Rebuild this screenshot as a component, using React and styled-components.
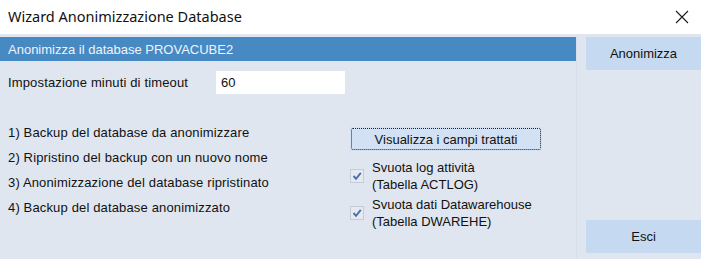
import styled, { createGlobalStyle } from "styled-components";

const GlobalStyle = createGlobalStyle`
  html, body {
    margin: 0;
    padding: 0;
    background: #ffffff;
  }
  * {
    box-sizing: border-box;
  }
`;

const steps = [
  "1) Backup del database da anonimizzare",
  "2) Ripristino del backup con un nuovo nome",
  "3) Anonimizzazione del database ripristinato",
  "4) Backup del database anonimizzato",
];

const options = [
  { title: "Svuota log attività", table: "(Tabella ACTLOG)" },
  { title: "Svuota dati Datawarehouse", table: "(Tabella DWAREHE)" },
];

const CheckIcon = () => (
  <svg width="10" height="10" viewBox="0 0 10 10">
    <path d="M1.5 5 L4 7.8 L8.8 1.8" fill="none" stroke="#4a6fae" strokeWidth="1.9" />
  </svg>
);

const CloseIcon = () => (
  <svg width="14" height="14" viewBox="0 0 14 14">
    <path d="M1 1 L13 13 M13 1 L1 13" stroke="#1a1a1a" strokeWidth="1.1" />
  </svg>
);

const App = () => {
  return (
    <>
      <GlobalStyle />
      <Window>
        <TitleBar>
          <TitleText>Wizard Anonimizzazione Database</TitleText>
          <CloseButton>
            <CloseIcon />
          </CloseButton>
        </TitleBar>
        <Body>
          <MainPane>
            <HeaderBar>Anonimizza il database PROVACUBE2</HeaderBar>
            <TimeoutRow>
              <Label>Impostazione minuti di timeout</Label>
              <TimeoutInput defaultValue="60" />
            </TimeoutRow>
            <StepsRow>
              <StepList>
                {steps.map((step) => (
                  <StepItem key={step}>{step}</StepItem>
                ))}
              </StepList>
              <OptionsColumn>
                <FieldsButton>
                  <FocusRing>Visualizza i campi trattati</FocusRing>
                </FieldsButton>
                {options.map((opt) => (
                  <OptionRow key={opt.table}>
                    <CheckBox>
                      <CheckIcon />
                    </CheckBox>
                    <OptionText>
                      <span>{opt.title}</span>
                      <span>{opt.table}</span>
                    </OptionText>
                  </OptionRow>
                ))}
              </OptionsColumn>
            </StepsRow>
          </MainPane>
          <SidePane>
            <SideButton>Anonimizza</SideButton>
            <SideButton>Esci</SideButton>
          </SidePane>
        </Body>
      </Window>
    </>
  );
};

const Window = styled.div`
  width: 701px;
  height: 259px;
  display: flex;
  flex-direction: column;
  font-family: "Liberation Sans", Arial, sans-serif;
  overflow: hidden;
`;

const TitleBar = styled.div`
  height: 34px;
  display: flex;
  align-items: center;
  justify-content: space-between;
  padding: 0 12px 2px 8px;
  background: #ffffff;
`;

const TitleText = styled.span`
  font-family: "Noto Sans", "Liberation Sans", sans-serif;
  font-size: 14.5px;
  color: #111111;
`;

const CloseButton = styled.span`
  display: flex;
  align-items: center;
  margin-top: 2px;
`;

const Body = styled.div`
  flex: 1;
  display: flex;
  background: #dfe6f0;
  padding-top: 3px;
`;

const MainPane = styled.div`
  width: 577px;
  display: flex;
  flex-direction: column;
  border-right: 1px solid #d6dfea;
`;

const HeaderBar = styled.div`
  height: 24px;
  display: flex;
  align-items: center;
  padding-left: 8px;
  background: #4689c3;
  color: #eef4fb;
  font-size: 13px;
`;

const TimeoutRow = styled.div`
  display: flex;
  align-items: center;
  margin-top: 10px;
  padding-left: 8px;
  height: 23px;
`;

const Label = styled.span`
  width: 208px;
  font-size: 13px;
  letter-spacing: 0.15px;
  color: #111111;
`;

const TimeoutInput = styled.input`
  width: 129px;
  height: 23px;
  border: none;
  outline: none;
  background: #ffffff;
  padding: 0 5px;
  font-family: "Liberation Sans", Arial, sans-serif;
  font-size: 13px;
  color: #111111;
`;

const StepsRow = styled.div`
  display: flex;
  margin-top: 26px;
  padding-left: 8px;
`;

const StepList = styled.ul`
  list-style: none;
  margin: 0;
  padding: 0;
  width: 342px;
`;

const StepItem = styled.li`
  height: 25px;
  line-height: 25px;
  font-size: 13px;
  letter-spacing: 0.15px;
  color: #111111;
`;

const OptionsColumn = styled.div`
  display: flex;
  flex-direction: column;
  padding-top: 7px;
  gap: 3px;
`;

const FieldsButton = styled.div`
  width: 192px;
  height: 24px;
  padding: 1px;
  background: #d2e1f3;
  margin-bottom: 5px;
`;

const FocusRing = styled.div`
  height: 100%;
  display: flex;
  align-items: center;
  justify-content: center;
  border: 1px dotted #222222;
  border-radius: 2px;
  font-size: 13px;
  color: #111111;
`;

const OptionRow = styled.div`
  display: flex;
  align-items: center;
  gap: 8px;
`;

const CheckBox = styled.span`
  width: 14px;
  height: 14px;
  display: flex;
  align-items: center;
  justify-content: center;
  background: #e6eaf0;
  border: 1px solid #c4ccd8;
`;

const OptionText = styled.div`
  display: flex;
  flex-direction: column;
  font-size: 13px;
  line-height: 17px;
  color: #111111;
`;

const SidePane = styled.div`
  flex: 1;
  display: flex;
  flex-direction: column;
  justify-content: space-between;
  padding: 0 0 6px 9px;
`;

const SideButton = styled.div`
  height: 33px;
  display: flex;
  align-items: center;
  justify-content: center;
  background: #c5d9f1;
  font-size: 13px;
  color: #111111;
`;

export default App;
